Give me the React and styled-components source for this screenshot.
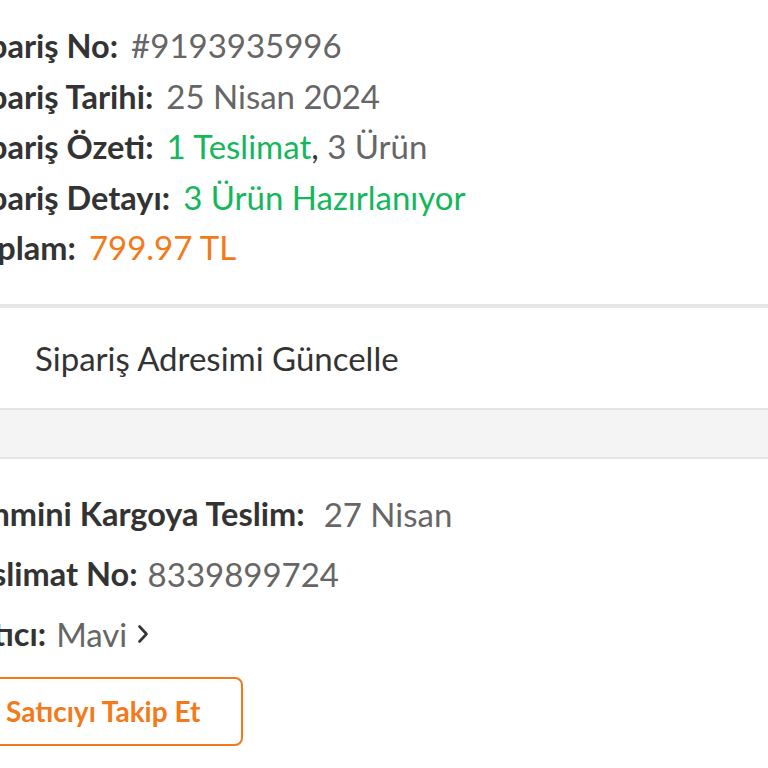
import React from 'react';
import styled, { createGlobalStyle } from 'styled-components';

const GlobalStyle = createGlobalStyle`
    html, body {
        margin: 0;
        padding: 0;
        background: #ffffff;
    }
    body {
        font-family: Lato, "Open Sans", sans-serif;
        overflow: hidden;
    }
`;

export default function App() {
    const summary = [
        { label: 'Sipariş No:', value: <Value>#9193935996</Value> },
        { label: 'Sipariş Tarihi:', value: <Value>25 Nisan 2024</Value> },
        {
            label: 'Sipariş Özeti:',
            value: (
                <Value>
                    <Green>1 Teslimat</Green><Dark>,</Dark> 3 Ürün
                </Value>
            ),
        },
        { label: 'Sipariş Detayı:', value: <Value><Green>3 Ürün Hazırlanıyor</Green></Value> },
        { label: 'Toplam:', value: <Value><Orange>799.97 TL</Orange></Value> },
    ];

    return (
        <>
            <GlobalStyle />
            <Page>
                <Summary>
                    {summary.map((row) => (
                        <SummaryRow key={row.label}>
                            <Label>{row.label}</Label>
                            {row.value}
                        </SummaryRow>
                    ))}
                </Summary>
                <ThickDivider />
                <AddressRow>Sipariş Adresimi Güncelle</AddressRow>
                <Band />
                <Delivery>
                    <DeliveryRow>
                        <Label>Tahmini Kargoya Teslim:</Label>
                        <Value gap={19}>27 Nisan</Value>
                    </DeliveryRow>
                    <DeliveryRow>
                        <Label>Teslimat No:</Label>
                        <Value gap={10}>8339899724</Value>
                    </DeliveryRow>
                    <DeliveryRow>
                        <Label>Satıcı:</Label>
                        <Value gap={10}>Mavi</Value>
                        <Chevron viewBox="0 0 12 20">
                            <path d="M2.5 2.5 L9.5 10 L2.5 17.5" fill="none" stroke="#333" strokeWidth="2.6" strokeLinecap="round" strokeLinejoin="round" />
                        </Chevron>
                    </DeliveryRow>
                    <FollowButton>Satıcıyı Takip Et</FollowButton>
                </Delivery>
            </Page>
        </>
    );
}

const Page = styled.div`
    width: 768px;
    height: 768px;
    overflow: hidden;
    background: #ffffff;
`;

const Summary = styled.div`
    display: flex;
    flex-direction: column;
    padding: 20px 0 31px;
    margin-left: -37px;
`;

const SummaryRow = styled.div`
    display: flex;
    align-items: baseline;
    height: 50.5px;
    line-height: 50.5px;
    font-size: 32.5px;
    white-space: nowrap;
`;

const Label = styled.span`
    font-weight: 700;
    color: #333333;
`;

const Value = styled.span`
    margin-left: ${(props) => props.gap ?? 13}px;
    color: #666666;
    font-size: 33px;
    font-weight: 400;
`;

const Green = styled.span`
    color: #14b75b;
`;

const Orange = styled.span`
    color: #f27a1a;
`;

const Dark = styled.span`
    color: #333333;
`;

const ThickDivider = styled.div`
    height: 4px;
    background: #e6e6e6;
`;

const AddressRow = styled.div`
    display: flex;
    align-items: center;
    height: 100px;
    padding-left: 35px;
    font-size: 33px;
    color: #333333;
    border-bottom: 2px solid #e4e4e4;
`;

const Band = styled.div`
    height: 47px;
    background: #f4f4f4;
    border-bottom: 2px solid #e6e6e6;
`;

const Delivery = styled.div`
    display: flex;
    flex-direction: column;
    align-items: flex-start;
    padding-top: 25px;
    margin-left: -41px;
`;

const DeliveryRow = styled.div`
    display: flex;
    align-items: center;
    height: 60px;
    font-size: 32.5px;
    white-space: nowrap;
`;

const Chevron = styled.svg`
    width: 12px;
    height: 20px;
    margin-left: 10px;
`;

const FollowButton = styled.button`
    margin-top: 13px;
    height: 69px;
    padding: 0 41px 0 45px;
    border: 2px solid #f27a1a;
    border-radius: 8px;
    background: #ffffff;
    color: #f27a1a;
    font-family: Lato, sans-serif;
    font-size: 28px;
    font-weight: 700;
    white-space: nowrap;
`;
